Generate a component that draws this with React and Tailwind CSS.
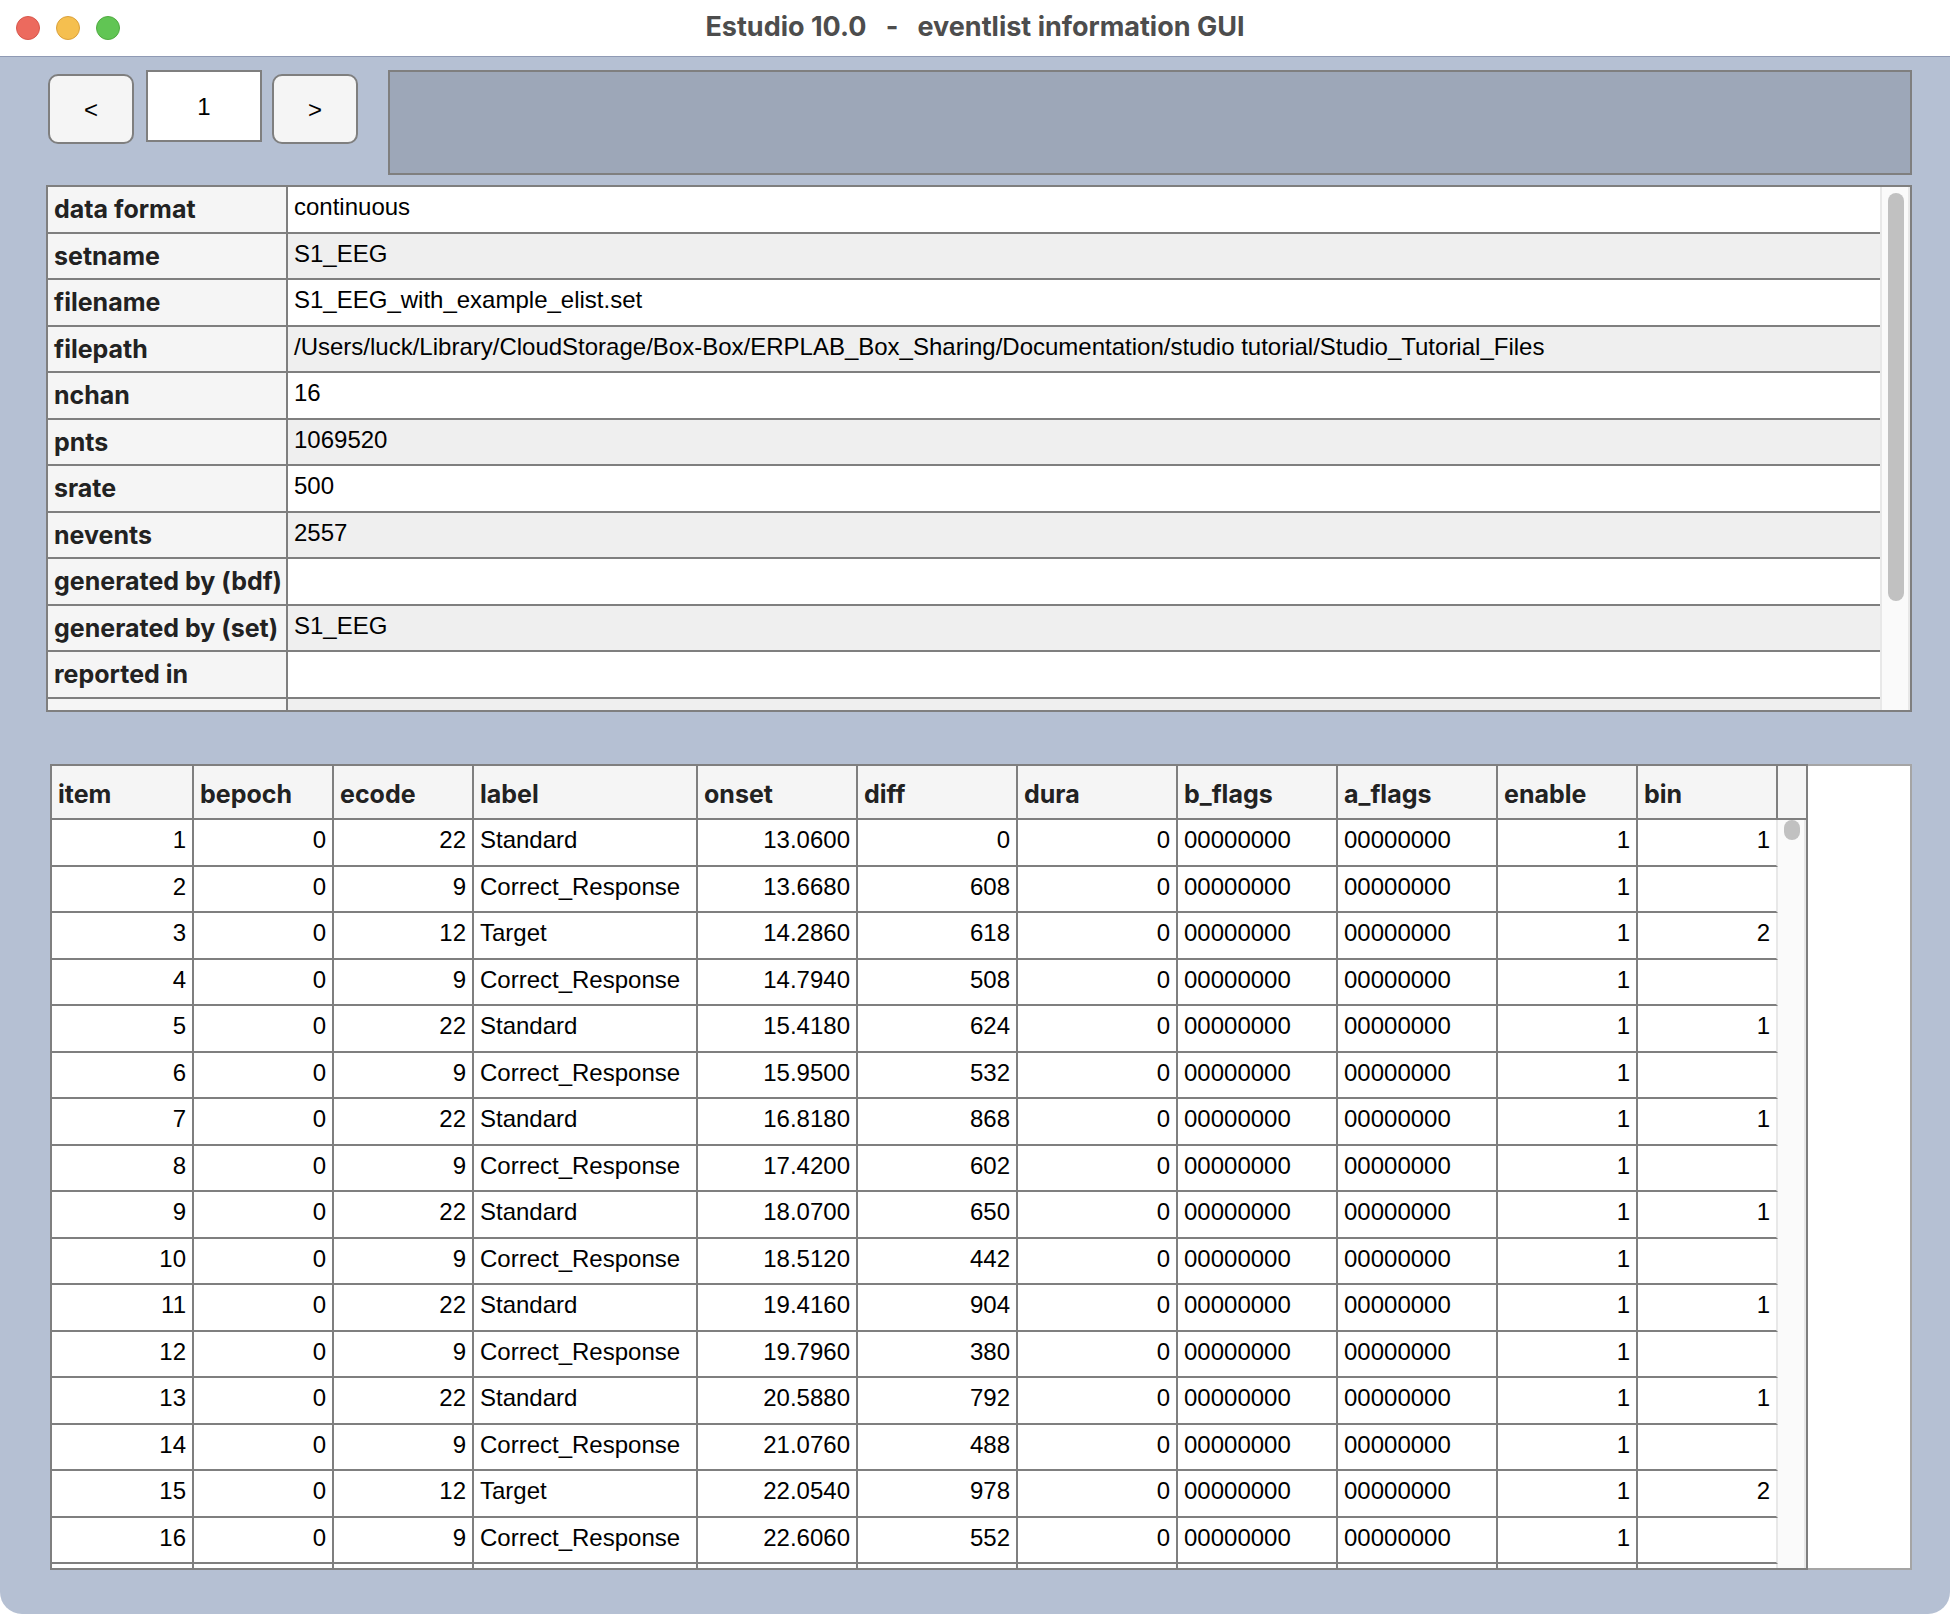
import React from "react";

const info = [
  ["data format", "continuous"],
  ["setname", "S1_EEG"],
  ["filename", "S1_EEG_with_example_elist.set"],
  ["filepath", "/Users/luck/Library/CloudStorage/Box-Box/ERPLAB_Box_Sharing/Documentation/studio tutorial/Studio_Tutorial_Files"],
  ["nchan", "16"],
  ["pnts", "1069520"],
  ["srate", "500"],
  ["nevents", "2557"],
  ["generated by (bdf)", ""],
  ["generated by (set)", "S1_EEG"],
  ["reported in", ""],
  ["", ""],
];

const columns = [
  { name: "item", width: "w-[142px]", align: "text-right" },
  { name: "bepoch", width: "w-[140px]", align: "text-right" },
  { name: "ecode", width: "w-[140px]", align: "text-right" },
  { name: "label", width: "w-[224px]", align: "text-left" },
  { name: "onset", width: "w-[160px]", align: "text-right" },
  { name: "diff", width: "w-[160px]", align: "text-right" },
  { name: "dura", width: "w-[160px]", align: "text-right" },
  { name: "b_flags", width: "w-[160px]", align: "text-left" },
  { name: "a_flags", width: "w-[160px]", align: "text-left" },
  { name: "enable", width: "w-[140px]", align: "text-right" },
  { name: "bin", width: "w-[140px]", align: "text-right" },
];

const labels = { 22: "Standard", 9: "Correct_Response", 12: "Target" };
const bins = { 22: "1", 9: "", 12: "2" };

const events = [
  [22, "13.0600", 0],
  [9, "13.6680", 608],
  [12, "14.2860", 618],
  [9, "14.7940", 508],
  [22, "15.4180", 624],
  [9, "15.9500", 532],
  [22, "16.8180", 868],
  [9, "17.4200", 602],
  [22, "18.0700", 650],
  [9, "18.5120", 442],
  [22, "19.4160", 904],
  [9, "19.7960", 380],
  [22, "20.5880", 792],
  [9, "21.0760", 488],
  [12, "22.0540", 978],
  [9, "22.6060", 552],
].map(([ecode, onset, diff], i) => [
  i + 1, 0, ecode, labels[ecode], onset, diff, 0, "00000000", "00000000", 1, bins[ecode],
]);

const rows = [...events, columns.map(() => "")];

const navButton =
  "mt-1 h-[70px] w-[86px] rounded-[10px] border-2 border-[#7f7f7f] bg-[#f5f5f5] pt-0.5 text-2xl text-black";

export default function App() {
  return (
    <div className="bg-white">
      <div className="flex h-screen flex-col overflow-hidden rounded-b-[22px] bg-[#b5c0d3] font-['Liberation_Sans',Arial,sans-serif] text-black">
        <header className="flex h-[57px] shrink-0 items-center border-b border-[#8f9ab4] bg-white px-4">
          <div className="flex flex-1 gap-4">
            <button aria-label="Close" className="size-6 rounded-full border border-[#d8574c] bg-[#ec6a5e]" />
            <button aria-label="Minimize" className="size-6 rounded-full border border-[#dba13b] bg-[#f5bf4f]" />
            <button aria-label="Zoom" className="size-6 rounded-full border border-[#50ab41] bg-[#61c554]" />
          </div>
          <h1 className="whitespace-pre pb-0.5 font-['Inter',sans-serif] text-[27px] font-bold text-[#4d4d4d]">
            {"Estudio 10.0   -   eventlist information GUI"}
          </h1>
          <div className="flex-1" />
        </header>

        <main className="flex min-h-0 flex-1 flex-col pt-[13px] pr-[38px] pb-11 pl-[46px]">
          <div className="flex shrink-0 items-start pl-0.5">
            <button className={navButton}>&lt;</button>
            <input
              aria-label="Dataset"
              defaultValue="1"
              className="ml-3 h-[72px] w-[116px] border-2 border-[#7f7f7f] bg-white pt-0.5 text-center text-2xl outline-none"
            />
            <button className={"ml-2.5 " + navButton}>&gt;</button>
            <div className="ml-[30px] h-[105px] flex-1 border-2 border-[#7f7f7f] bg-[#9da7b8]" />
          </div>

          <div className="mt-2.5 flex h-[527px] shrink-0 overflow-hidden border-2 border-[#7f7f7f] bg-white">
            <table className="min-w-0 flex-1 table-fixed border-separate border-spacing-0 self-start">
              <tbody>
                {info.map(([key, value], i) => (
                  <tr key={i} className="h-[46px] odd:h-[47px] even:bg-[#efefef]">
                    <th
                      scope="row"
                      className="w-[240px] whitespace-nowrap border-r-2 border-b-2 border-[#7f7f7f] bg-[#f5f5f5] py-0 pr-0 pl-1.5 text-left align-top font-['Inter',sans-serif] text-[25px] leading-[44px] font-bold text-[#222222]"
                    >
                      {key}
                    </th>
                    <td className="truncate border-b-2 border-[#7f7f7f] px-1.5 py-0 align-top text-2xl leading-10">
                      {value}
                    </td>
                  </tr>
                ))}
              </tbody>
            </table>
            <div className="w-[30px] border-x-2 border-[#e8e8e8] bg-[#fafafa] pt-1.5 pl-1.5">
              <div className="h-[408px] w-4 rounded-full bg-[#c1c1c1]" />
            </div>
          </div>

          <div className="mt-[52px] ml-1 flex min-h-0 flex-1">
            <div className="shrink-0 overflow-hidden border-2 border-[#7f7f7f] bg-white">
              <table className="table-fixed border-separate border-spacing-0">
                <thead>
                  <tr className="h-[54px]">
                    {columns.map((c) => (
                      <th
                        key={c.name}
                        scope="col"
                        className={
                          c.width +
                          " border-r-2 border-b-2 border-[#7f7f7f] bg-[#f5f5f5] px-1.5 pt-1 pb-0 text-left font-['Inter',sans-serif] text-[25px] leading-[44px] font-bold text-[#222222]"
                        }
                      >
                        {c.name}
                      </th>
                    ))}
                    <td className="w-7 border-b-2 border-[#7f7f7f] bg-[#f5f5f5] p-0" />
                  </tr>
                </thead>
                <tbody>
                  {rows.map((row, r) => (
                    <tr key={r} className="h-[46px] odd:h-[47px]">
                      {row.map((cell, i) => (
                        <td
                          key={i}
                          className={
                            columns[i].align +
                            " border-r-2 border-b-2 border-[#7f7f7f] px-1.5 py-0 align-top text-2xl leading-10 nth-[11]:border-r-[#e8e8e8]"
                          }
                        >
                          {cell}
                        </td>
                      ))}
                      {r === 0 && (
                        <td rowSpan={rows.length} className="border-r-2 border-[#e8e8e8] bg-[#fafafa] p-0 pl-1.5 align-top">
                          <div className="h-5 w-4 rounded-full bg-[#c1c1c1]" />
                        </td>
                      )}
                    </tr>
                  ))}
                </tbody>
              </table>
            </div>
            <div className="flex-1 border-2 border-l-0 border-[#a5a5a5] bg-white" />
          </div>
        </main>
      </div>
    </div>
  );
}
